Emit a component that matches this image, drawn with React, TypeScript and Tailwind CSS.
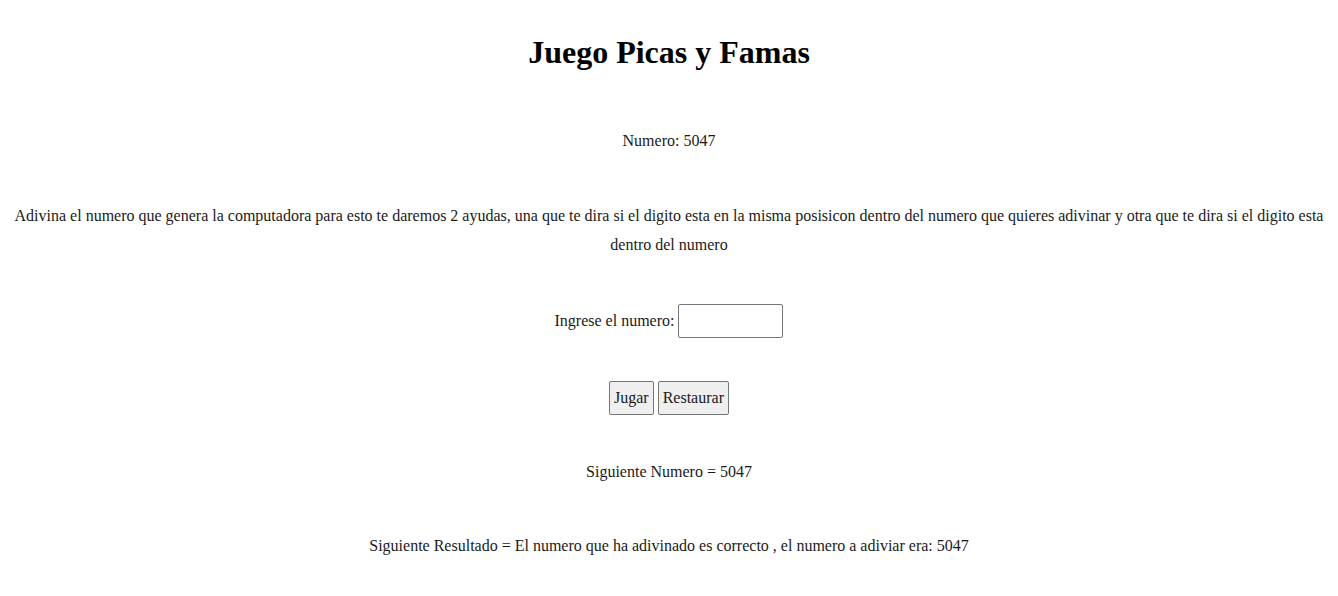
import React from "react";

export default function App() {
  const serif = { fontFamily: '"Liberation Serif", "DejaVu Serif", serif' };
  return (
    <div className="w-full min-h-[596px] bg-white text-[#1a1a1a] text-center" style={serif}>
      <h1 className="pt-[27px] text-[32px] leading-[50px] font-bold text-black">Juego Picas y Famas</h1>
      <p className="mt-[49px] text-[16px] leading-[29px]">Numero: 5047</p>
      <p className="mt-[46px] px-[8px] text-[16px] leading-[29px]">
        Adivina el numero que genera la computadora para esto te daremos 2 ayudas, una que te dira si el digito esta en la misma posisicon dentro del numero que quieres adivinar y otra que te dira si el digito esta dentro del numero
      </p>
      <div className="mt-[45px] flex items-center justify-center gap-[4px] text-[16px]">
        <span>Ingrese el numero:</span>
        <input className="w-[105px] h-[34px] border border-[#767676] rounded-[2px] bg-white" />
      </div>
      <div className="mt-[43px] flex items-center justify-center gap-[4px] text-[16px]">
        <button className="h-[34px] px-[4px] border border-[#767676] rounded-[2px] bg-[#efefef]">Jugar</button>
        <button className="h-[34px] px-[4px] border border-[#767676] rounded-[2px] bg-[#efefef]">Restaurar</button>
      </div>
      <p className="mt-[42px] text-[16px] leading-[29px]">Siguiente Numero = 5047</p>
      <p className="mt-[45px] text-[16px] leading-[29px]">
        Siguiente Resultado = El numero que ha adivinado es correcto , el numero a adiviar era: 5047
      </p>
    </div>
  );
}
